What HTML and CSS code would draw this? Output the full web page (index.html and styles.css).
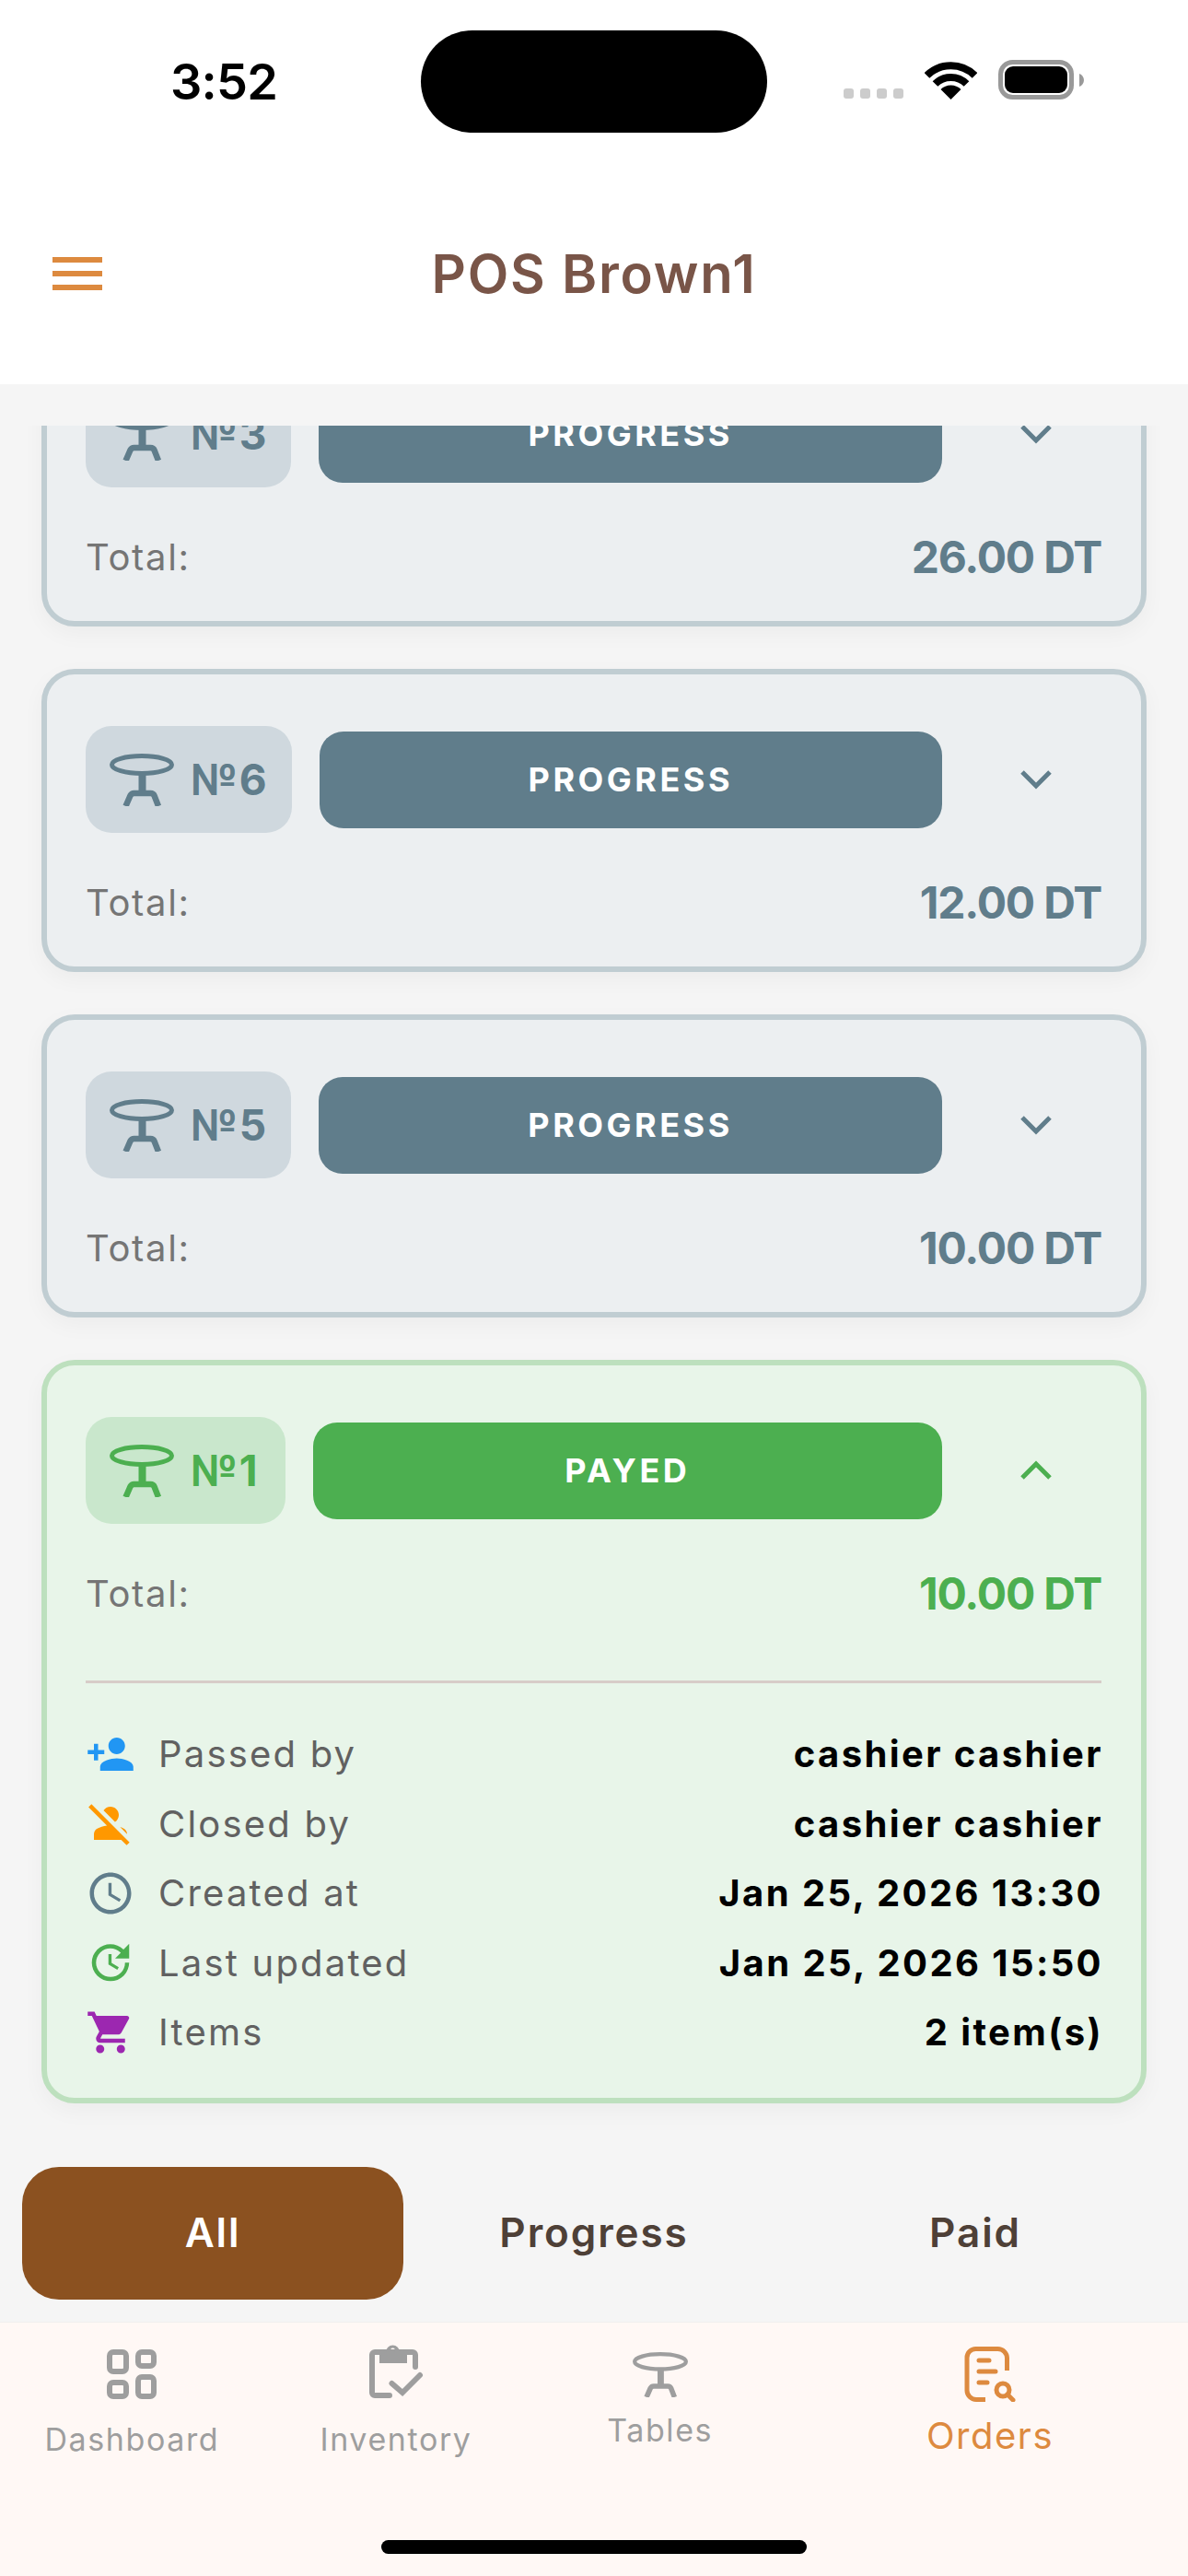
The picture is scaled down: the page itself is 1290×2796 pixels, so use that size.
FILE: index.html
```html
<!DOCTYPE html>
<html lang="en">
<head>
    <meta charset="UTF-8">
    <meta name="viewport" content="width=device-width, initial-scale=1.0">
    <title>POS Brown1</title>
    <link rel="stylesheet" href="styles.css">
</head>
<body>
    <svg class="defs" width="0" height="0">
        <symbol id="table" viewBox="0 0 70 57">
            <ellipse cx="35" cy="12" rx="32.5" ry="9.5" fill="none" stroke="currentColor" stroke-width="5"/>
            <rect x="31.500" y="22" width="8" height="20" fill="currentColor"/>
            <path d="M17.500 57l5-11.500q1.500-2.500 4-2.500h18q3 0 4 2.500l4.500 11.500" fill="none" stroke="currentColor" stroke-width="6.500"/>
        </symbol>
        <symbol id="chev-down" viewBox="0 0 36 22">
            <path d="M3 3l15 15L33 3" fill="none" stroke="currentColor" stroke-width="5"/>
        </symbol>
    </svg>

    <div class="top">
        <div class="statusbar">
            <div class="time">3:52</div>
            <div class="island"></div>
            <div class="status-icons">
                <div class="dots"><i></i><i></i><i></i><i></i></div>
                <svg width="57" height="42" viewBox="0 0 57 42">
                    <path d="M2.500 16a37 37 0 0 1 52 0" fill="none" stroke="#000" stroke-width="8"/>
                    <path d="M11.500 25a24 24 0 0 1 34 0" fill="none" stroke="#000" stroke-width="8"/>
                    <path d="M28.500 42L17.500 31a15.500 15.500 0 0 1 22 0z"/>
                </svg>
                <svg width="93" height="43" viewBox="0 0 93 43">
                    <rect x="2.500" y="2.500" width="77" height="38" rx="13" fill="none" stroke="#999" stroke-width="5"/>
                    <rect x="7" y="7" width="68" height="29" rx="9"/>
                    <path d="M88 15c3 1 5 4 5 7s-2 6-5 7z" fill="#999"/>
                </svg>
            </div>
        </div>
        <div class="appbar">
            <div class="menu"><i></i><i></i><i></i></div>
            <h1>POS Brown1</h1>
        </div>
    </div>

    <div class="orders">
        <div class="card card-first">
            <div class="card-head">
                <div class="badge"><svg class="table-icon"><use href="#table"/></svg><span>№3</span></div>
                <div class="state">PROGRESS</div>
                <div class="toggle"><svg class="chev"><use href="#chev-down"/></svg></div>
            </div>
            <div class="total"><span>Total:</span><b>26.00 DT</b></div>
        </div>
        <div class="card">
            <div class="card-head">
                <div class="badge"><svg class="table-icon"><use href="#table"/></svg><span>№6</span></div>
                <div class="state">PROGRESS</div>
                <div class="toggle"><svg class="chev"><use href="#chev-down"/></svg></div>
            </div>
            <div class="total"><span>Total:</span><b>12.00 DT</b></div>
        </div>
        <div class="card">
            <div class="card-head">
                <div class="badge"><svg class="table-icon"><use href="#table"/></svg><span>№5</span></div>
                <div class="state">PROGRESS</div>
                <div class="toggle"><svg class="chev"><use href="#chev-down"/></svg></div>
            </div>
            <div class="total"><span>Total:</span><b>10.00 DT</b></div>
        </div>
        <div class="card card-paid">
            <div class="card-head">
                <div class="badge"><svg class="table-icon"><use href="#table"/></svg><span>№1</span></div>
                <div class="state">PAYED</div>
                <div class="toggle"><svg class="chev chev-up"><use href="#chev-down"/></svg></div>
            </div>
            <div class="total"><span>Total:</span><b>10.00 DT</b></div>
            <div class="details">
                <div class="row">
                    <svg class="row-icon" viewBox="0 0 24 24" fill="#2196f3"><path d="M15 12c2.21 0 4-1.79 4-4s-1.79-4-4-4-4 1.79-4 4 1.79 4 4 4zm-9-2V7H4v3H1v2h3v3h2v-3h3v-2H6zm9 4c-2.67 0-8 1.34-8 4v2h16v-2c0-2.66-5.33-4-8-4z"/></svg>
                    <span class="row-label">Passed by</span>
                    <b>cashier cashier</b>
                </div>
                <div class="row">
                    <svg class="row-icon" viewBox="0 0 24 24" fill="#ff9800"><path d="M8.65 5.82C9.36 4.72 10.6 4 12 4c2.21 0 4 1.79 4 4 0 1.4-.72 2.64-1.82 3.35L8.65 5.82zM20 17.17c-.02-1.1-.63-2.11-1.61-2.62-.54-.28-1.13-.54-1.77-.76L20 17.17zm1.19 4.02L2.81 2.81 1.39 4.22l8.89 8.89c-1.81.23-3.39.79-4.67 1.45C4.61 15.07 4 16.1 4 17.22V20h13.17l2.61 2.61 1.41-1.42z"/></svg>
                    <span class="row-label">Closed by</span>
                    <b>cashier cashier</b>
                </div>
                <div class="row">
                    <svg class="row-icon" viewBox="0 0 24 24" fill="#607d8b"><path d="M11.99 2C6.47 2 2 6.48 2 12s4.47 10 9.99 10C17.52 22 22 17.52 22 12S17.52 2 11.99 2zM12 20c-4.42 0-8-3.58-8-8s3.58-8 8-8 8 3.58 8 8-3.58 8-8 8zm.5-13H11v6l5.25 3.15.75-1.23-4.5-2.67z"/></svg>
                    <span class="row-label">Created at</span>
                    <b>Jan 25, 2026 13:30</b>
                </div>
                <div class="row">
                    <svg class="row-icon" viewBox="0 0 24 24" fill="#4caf50"><path d="M21 10.12h-6.78l2.74-2.82c-2.73-2.7-7.15-2.8-9.88-.1-2.73 2.71-2.73 7.08 0 9.79s7.15 2.71 9.88 0C18.32 15.65 19 14.08 19 12.1h2c0 1.98-.88 4.55-2.64 6.29-3.51 3.48-9.21 3.48-12.72 0-3.5-3.47-3.53-9.11-.02-12.58s9.14-3.47 12.65 0L21 3v7.12zM12.5 8v4.25l3.5 2.08-.72 1.21L11 13V8h1.5z"/></svg>
                    <span class="row-label">Last updated</span>
                    <b>Jan 25, 2026 15:50</b>
                </div>
                <div class="row">
                    <svg class="row-icon" viewBox="0 0 24 24" fill="#9c27b0"><path d="M7 18c-1.1 0-1.99.9-1.99 2S5.9 22 7 22s2-.9 2-2-.9-2-2-2zM1 2v2h2l3.6 7.59-1.35 2.45c-.16.28-.25.61-.25.96 0 1.1.9 2 2 2h12v-2H7.42c-.14 0-.25-.11-.25-.25l.03-.12.9-1.63h7.45c.75 0 1.41-.41 1.75-1.03l3.58-6.49c.08-.14.12-.31.12-.48 0-.55-.45-1-1-1H5.21l-.94-2H1zm16 16c-1.1 0-1.99.9-1.99 2s.89 2 1.99 2 2-.9 2-2-.9-2-2-2z"/></svg>
                    <span class="row-label">Items</span>
                    <b>2 item(s)</b>
                </div>
            </div>
        </div>
    </div>

    <div class="filters">
        <div class="filter active">All</div>
        <div class="filter">Progress</div>
        <div class="filter">Paid</div>
    </div>

    <div class="nav">
        <div class="nav-item nav-dashboard">
            <svg width="54" height="54" viewBox="0 0 54 54" fill="none" stroke="currentColor" stroke-width="6">
                <rect x="3" y="3" width="18" height="21" rx="4"/>
                <rect x="3" y="36" width="18" height="15" rx="4"/>
                <rect x="34" y="3" width="17" height="15" rx="4"/>
                <rect x="34" y="30" width="17" height="21" rx="4"/>
            </svg>
            <span>Dashboard</span>
        </div>
        <div class="nav-item nav-inventory">
            <svg width="60" height="60" viewBox="0 0 60 60" fill="none" stroke="currentColor" stroke-width="6" stroke-linecap="round">
                <path d="M23 56H7a3 3 0 0 1-3-3V12a3 3 0 0 1 3-3h41a3 3 0 0 1 3 3v13"/>
                <path d="M25.500 43L37 53l19-19"/>
                <path d="M12 9h7a7.500 7.500 0 0 1 15 0h8v12H12zM26.500 4.500a2.500 2.500 0 1 0 .01 0z" fill="currentColor" fill-rule="evenodd" stroke="none"/>
            </svg>
            <span>Inventory</span>
        </div>
        <div class="nav-item nav-tables">
            <svg class="nav-table"><use href="#table"/></svg>
            <span>Tables</span>
        </div>
        <div class="nav-item nav-orders active">
            <svg width="56" height="60" viewBox="0 0 56 60" fill="none" stroke="currentColor" stroke-width="5" stroke-linecap="round">
                <path d="M23 57.500H13a10 10 0 0 1-10-10V12A9.500 9.500 0 0 1 12.500 2.500h24A10 10 0 0 1 46.500 12.500V26" stroke-linecap="butt"/>
                <path d="M16 15h11M16 27h18M16 39h9"/>
                <circle cx="42" cy="47" r="7"/>
                <path d="M47 52l6 6"/>
            </svg>
            <span>Orders</span>
        </div>
        <div class="home-bar"></div>
    </div>
</body>
</html>
```

FILE: styles.css
```css
* {
    box-sizing: border-box;
}
body {
    font-family: Inter, "Noto Sans", sans-serif;
    margin: 0;
    width: 1290px;
    height: 2796px;
    overflow: hidden;
    display: flex;
    flex-direction: column;
    background-color: #f5f5f5;
}
.defs {
    display: block;
    height: 0;
}

/* top */
.top {
    height: 417px;
    flex: none;
    background-color: #fff;
}
.statusbar {
    height: 177px;
    padding-top: 33px;
    display: grid;
    grid-template-columns: 457px 376px 457px;
    align-items: start;
}
.time {
    padding-left: 185px;
    font-size: 54px;
    font-weight: 600;
    line-height: 111px;
    letter-spacing: -0.8px;
    color: #000;
}
.island {
    height: 111px;
    border-radius: 56px;
    background-color: #000;
}
.status-icons {
    display: flex;
    align-items: flex-end;
    gap: 23px;
    padding: 32px 0 0 83px;
}
.dots {
    display: flex;
    gap: 7px;
    padding-bottom: 1px;
}
.dots i {
    width: 11px;
    height: 11px;
    border-radius: 3px;
    background-color: #ccc;
}
.appbar {
    height: 240px;
    display: flex;
    align-items: center;
    justify-content: center;
    position: relative;
}
.menu {
    position: absolute;
    left: 57px;
    top: 102px;
    width: 54px;
    display: flex;
    flex-direction: column;
    gap: 9px;
}
.menu i {
    height: 6px;
    background-color: #dd8a3f;
}
h1 {
    margin: 0;
    font-size: 58px;
    font-weight: 600;
    letter-spacing: 1.8px;
    color: #795548;
}

/* order cards */
.orders {
    height: 1866px;
    margin-top: 45px;
    flex: none;
    padding: 0 45px;
    overflow: hidden;
    display: flex;
    flex-direction: column;
    gap: 46px;
}
.card {
    flex: none;
    padding-top: 56px;
    border: 6px solid #c0cdd2;
    border-radius: 36px;
    background-color: #eceff1;
    color: #607d8b;
    box-shadow: 0 8px 24px rgba(0, 0, 0, 0.04);
}
.card-first {
    margin-top: -111px;
}
.card-paid {
    border-color: #bde0be;
    background-color: #e8f5e9;
    color: #4caf50;
}
.card-head {
    display: flex;
    align-items: center;
    padding-left: 42px;
    padding-right: 43px;
}
.badge {
    height: 116px;
    padding: 0 25px 0 26px;
    display: flex;
    align-items: center;
    gap: 18px;
    border-radius: 28px;
    background-color: #cfd8de;
    font-size: 46px;
    font-weight: 700;
    letter-spacing: 2px;
}
.card-paid .badge {
    padding-right: 28px;
    background-color: #c9e7cc;
}
.table-icon {
    width: 70px;
    height: 57px;
}
.state {
    flex: 1;
    height: 105px;
    margin-left: 30px;
    display: flex;
    align-items: center;
    justify-content: center;
    border-radius: 26px;
    background-color: #607d8b;
    color: #fff;
    font-size: 36px;
    font-weight: 700;
    letter-spacing: 3.5px;
}
.card-paid .state {
    background-color: #4caf50;
}
.toggle {
    width: 173px;
    display: flex;
    justify-content: flex-end;
    padding-right: 53px;
}
.chev {
    width: 36px;
    height: 22px;
}
.chev-up {
    transform: rotate(180deg);
}
.total {
    margin-top: 45px;
    height: 60px;
    margin-bottom: 40px;
    padding: 0 43px 0 42px;
    display: flex;
    align-items: center;
    justify-content: space-between;
    font-size: 40px;
    color: #757575;
}
.total span {
    letter-spacing: 1.7px;
}
.total b {
    font-size: 48px;
    font-weight: 700;
    letter-spacing: -1.2px;
    color: #607d8b;
}
.card-paid .total b {
    color: #4caf50;
}
.details {
    margin: 65px 43px 0 42px;
    border-top: 3px solid #d7ccc8;
    padding: 39px 0 33px;
}
.row {
    height: 75.5px;
    display: flex;
    align-items: center;
    font-size: 40px;
    color: #000;
}
.row-icon {
    width: 54px;
    height: 54px;
    margin-right: 25px;
}
.row-label {
    flex: 1;
    color: #616161;
    letter-spacing: 2.2px;
}
.row b {
    font-weight: 700;
    letter-spacing: 2.4px;
    margin-right: -2px;
}

/* filter tabs */
.filters {
    margin-top: 24px;
    padding: 0 24px;
    flex: none;
    display: grid;
    grid-template-columns: repeat(3, 1fr);
}
.filter {
    height: 144px;
    padding-bottom: 2px;
    display: flex;
    align-items: center;
    justify-content: center;
    border-radius: 40px;
    font-size: 44px;
    font-weight: 600;
    letter-spacing: 1.9px;
    color: #4e4037;
}
.filter.active {
    background-color: #8b5120;
    color: #fff;
}

/* bottom nav */
.nav {
    position: relative;
    margin-top: 24px;
    flex: 1;
    display: flex;
    border-top: 1px solid #f0f0ee;
    background-color: #fff8f5;
    color: #9e9e9e;
}
.nav-item {
    flex: 2;
    display: flex;
    flex-direction: column;
    align-items: center;
    font-size: 34px;
    letter-spacing: 1.6px;
}
.nav-dashboard {
    padding-top: 29px;
    gap: 23px;
}
.nav-inventory {
    padding-top: 23px;
    gap: 23px;
}
.nav-tables {
    padding-top: 32px;
    gap: 15px;
}
.nav-table {
    width: 60px;
    height: 49px;
}
.nav-orders {
    flex: 3;
    padding-top: 26px;
    gap: 12px;
    font-size: 40px;
    letter-spacing: 1.5px;
    color: #dd8a3f;
}
.home-bar {
    position: absolute;
    left: 414px;
    right: 414px;
    bottom: 24px;
    height: 15px;
    border-radius: 8px;
    background-color: #000;
}
```
